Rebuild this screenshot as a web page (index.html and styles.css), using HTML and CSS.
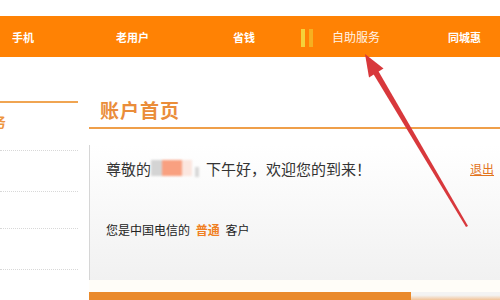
FILE: index.html
```html
<!DOCTYPE html>
<html>
<head>
<meta charset="utf-8">
<link rel="stylesheet" href="styles.css">
</head>
<body>
<div class="page">
  <div class="topgap"></div>
  <nav class="nav">
    <span class="nav-item w1">手机</span>
    <span class="nav-item w2">老用户</span>
    <span class="nav-item w3">省钱</span>
    <span class="bars"><i></i><i></i></span>
    <span class="nav-item w4 light">自助服务</span>
    <span class="nav-item">同城惠</span>
  </nav>
  <div class="body">
    <aside class="side">
      <div class="side-title">服务</div>
      <div class="side-row r1"></div>
      <div class="side-row r2"></div>
      <div class="side-row r3"></div>
      <div class="side-row"></div>
    </aside>
    <main class="main">
      <h1 class="title">账户首页</h1>
      <section class="box">
        <div class="greet">
          <span class="greet-text">尊敬的<span class="blur"><i class="b1"></i><i class="b2"></i><i class="b3"></i><i class="b4"></i></span>下午好，欢迎您的到来！</span>
          <a class="logout">退出</a>
        </div>
        <div class="level">您是中国电信的 <b>普通</b> 客户</div>
      </section>
      <div class="strip"></div>
      <div class="bottom"><div class="bar"></div><div class="mark"></div></div>
    </main>
  </div>
  <svg class="arrow" width="500" height="300" viewBox="0 0 500 300">
    <polygon points="468,226 466,227 371,70 376,67" fill="#d8383c"/>
    <polygon points="365,54 383.5,68.5 369,77.5" fill="#d8383c"/>
  </svg>
</div>
</body>
</html>
```
FILE: styles.css
```css
html, body {
  margin: 0;
  padding: 0;
  background: #fff;
}
.page {
  position: relative;
  width: 500px;
  height: 300px;
  overflow: hidden;
  font-family: "Noto Sans CJK SC", "Noto Sans", sans-serif;
}
.topgap {
  height: 16px;
}
.nav {
  height: 41px;
  background: #ff8204;
  display: flex;
  align-items: center;
  padding-left: 12px;
  color: #fff;
  font-size: 11px;
  font-weight: bold;
}
.nav-item {
  white-space: nowrap;
}
.w1 { width: 104px; }
.w2 { width: 117px; }
.w3 { width: 68px; }
.w4 { width: 116px; font-size: 12px; }
.light {
  font-weight: normal;
  color: #fff3e6;
}
.bars {
  width: 31px;
  display: flex;
  gap: 4px;
  height: 18px;
  margin-top: 2px;
}
.bars i {
  display: block;
  width: 4px;
  height: 18px;
  background: #f5d23a;
}
.bars i + i {
  background: #f6b020;
}
.body {
  display: flex;
}
.side {
  width: 78px;
  flex: none;
  margin-top: 44px;
  border-top: 2px solid #f0a552;
  margin-right: 11px;
}
.side-title {
  height: 47px;
  line-height: 36px;
  font-size: 14px;
  font-weight: bold;
  color: #ee9540;
  margin-left: -22px;
  white-space: nowrap;
}
.side-row {
  height: 40px;
  border-top: 1px dotted #d8d8d8;
}
.side-row.r2 { height: 36px; }
.main {
  flex: 1;
  display: flex;
  flex-direction: column;
}
.title {
  margin: 40px 0 0 0;
  padding: 0 0 4px 11px;
  height: 26px;
  line-height: 26px;
  font-size: 19px;
  font-weight: bold;
  color: #ea8d3a;
  border-bottom: 2px solid #ef9f4a;
  letter-spacing: 1px;
}
.box {
  margin-top: 16px;
  height: 135px;
  border-left: 1px solid #d6d6d6;
  padding: 12px 5px 0 16px;
  box-sizing: border-box;
  background: linear-gradient(#ffffff, #f1f1f1);
}
.greet {
  display: flex;
  justify-content: space-between;
  align-items: center;
  height: 22px;
}
.greet-text {
  font-size: 15px;
  color: #333;
  white-space: nowrap;
  display: flex;
  align-items: center;
}
.blur {
  display: flex;
  align-items: center;
  width: 55px;
  height: 20px;
  filter: blur(1px);
}
.blur i {
  display: block;
  height: 16px;
}
.b1 { width: 11px; background: #d4d4d4; }
.b2 { width: 20px; background: #f9a080; }
.b3 { width: 10px; background: #fbe6df; }
.b4 { width: 4px; height: 10px !important; margin-top: 8px; background: #d8d8d8; margin-left: 3px; }
.logout {
  font-size: 12px;
  color: #e2741e;
  text-decoration: underline;
  margin-right: 1px;
}
.level {
  margin-top: 41px;
  height: 20px;
  line-height: 20px;
  font-size: 12px;
  color: #222;
}
.level b {
  color: #f07f22;
  margin: 0 3px;
}
.strip {
  height: 12px;
  background: #fffdf8;
}
.bottom {
  height: 8px;
  display: flex;
}
.bar {
  width: 322px;
  background: #ea8a2c;
}
.mark {
  flex: 1;
  background: linear-gradient(#f3f3f3 0, #f3f3f3 40%, #f2c49a 100%);
}
.arrow {
  position: absolute;
  left: 0;
  top: 0;
}
```
